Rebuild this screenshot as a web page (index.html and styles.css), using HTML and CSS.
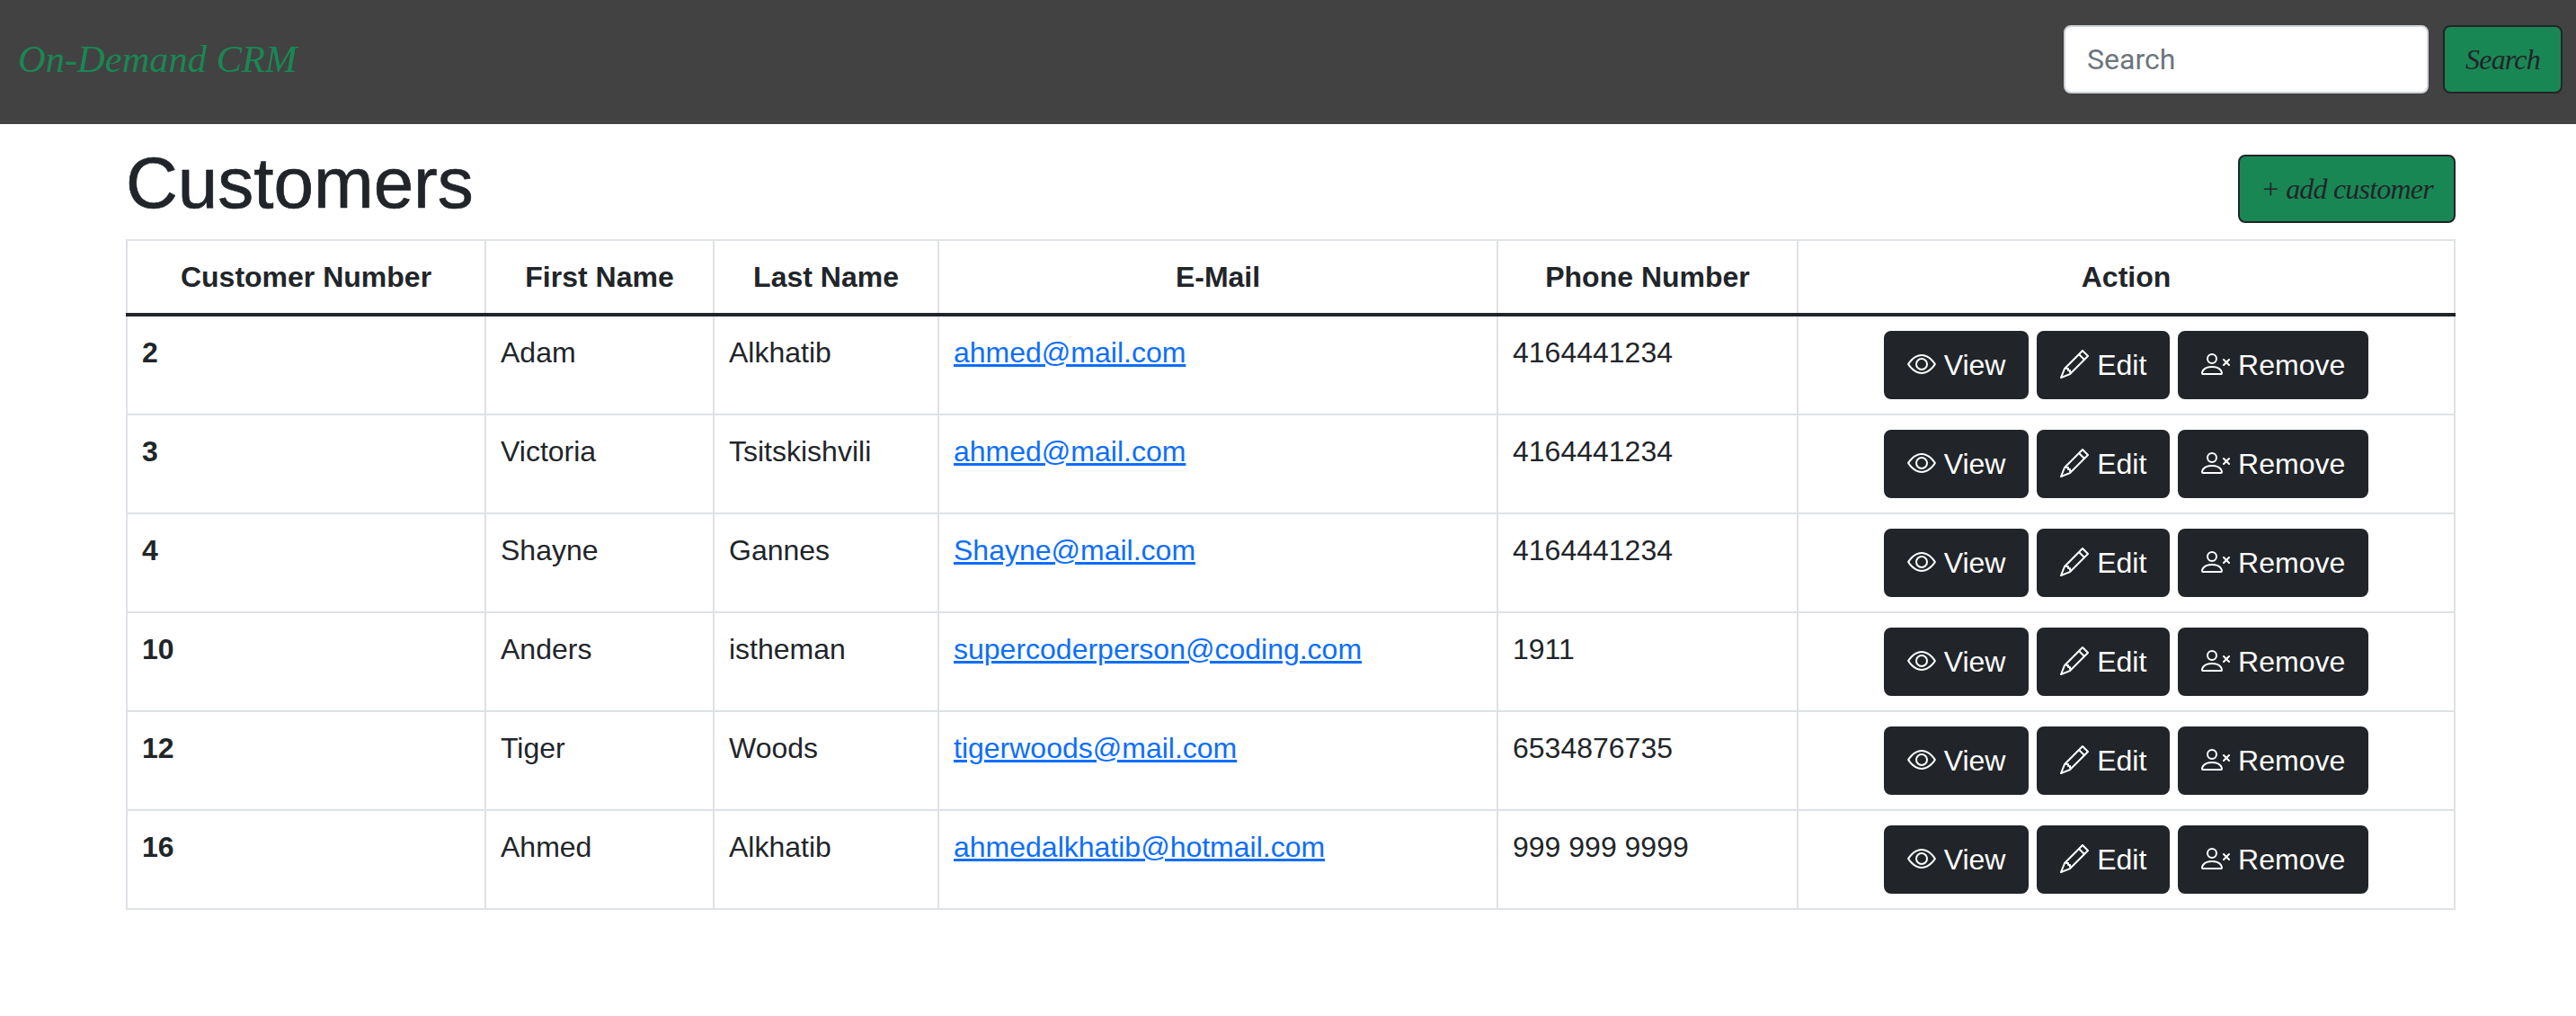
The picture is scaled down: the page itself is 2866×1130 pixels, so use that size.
FILE: index.html
```html
<!DOCTYPE html>
<html lang="en">
<head>
    <meta charset="UTF-8">
    <meta name="viewport" content="width=device-width, initial-scale=1.0">
    <title>On-Demand CRM</title>
    <link rel="stylesheet" href="styles.css">
</head>
<body>
    <svg class="icon-defs" xmlns="http://www.w3.org/2000/svg">
        <symbol id="icon-eye" viewBox="0 0 16 16">
            <path d="M16 8s-3-5.5-8-5.5S0 8 0 8s3 5.5 8 5.5S16 8 16 8zM1.173 8a13.133 13.133 0 0 1 1.66-2.043C4.12 4.668 5.88 3.5 8 3.5c2.12 0 3.879 1.168 5.168 2.457A13.133 13.133 0 0 1 14.828 8c-.058.087-.122.183-.195.288-.335.48-.83 1.12-1.465 1.755C11.879 11.332 10.119 12.5 8 12.5c-2.12 0-3.879-1.168-5.168-2.457A13.134 13.134 0 0 1 1.172 8z"/>
            <path d="M8 5.5a2.5 2.5 0 1 0 0 5 2.5 2.5 0 0 0 0-5zM4.5 8a3.5 3.5 0 1 1 7 0 3.5 3.5 0 0 1-7 0z"/>
        </symbol>
        <symbol id="icon-pencil" viewBox="0 0 16 16">
            <path d="M12.146.146a.5.5 0 0 1 .708 0l3 3a.5.5 0 0 1 0 .708l-10 10a.5.5 0 0 1-.168.11l-5 2a.5.5 0 0 1-.65-.65l2-5a.5.5 0 0 1 .11-.168l10-10zM11.207 2.5 13.5 4.793 14.793 3.5 12.5 1.207 11.207 2.5zm1.586 3L10.5 3.207 4 9.707V10h.5a.5.5 0 0 1 .5.5v.5h.5a.5.5 0 0 1 .5.5v.5h.293l6.5-6.5zm-9.761 5.175-.106.106-1.528 3.821 3.821-1.528.106-.106A.5.5 0 0 1 5 12.5V12h-.5a.5.5 0 0 1-.5-.5V11h-.5a.5.5 0 0 1-.468-.325z"/>
        </symbol>
        <symbol id="icon-person-x" viewBox="0 0 16 16">
            <path d="M6 8a3 3 0 1 0 0-6 3 3 0 0 0 0 6zm2-3a2 2 0 1 1-4 0 2 2 0 0 1 4 0zm4 8c0 1-1 1-1 1H1s-1 0-1-1 1-4 6-4 6 3 6 4zm-1-.004c-.001-.246-.154-.986-.832-1.664C9.516 10.68 8.289 10 6 10c-2.29 0-3.516.68-4.168 1.332-.678.678-.83 1.418-.832 1.664h10z"/>
            <path fill-rule="evenodd" d="M12.146 5.146a.5.5 0 0 1 .708 0L14 6.293l1.146-1.147a.5.5 0 0 1 .708.708L14.707 7l1.147 1.146a.5.5 0 0 1-.708.708L14 7.707l-1.146 1.147a.5.5 0 0 1-.708-.708L13.293 7l-1.147-1.146a.5.5 0 0 1 0-.708z"/>
        </symbol>
    </svg>

    <nav class="navbar">
        <a class="brand" href="#">On-Demand CRM</a>
        <form class="search-form">
            <input class="search-input" type="text" placeholder="Search">
            <button class="btn-green btn-search" type="button">Search</button>
        </form>
    </nav>

    <main class="content">
        <div class="title-row">
            <h1 class="page-title">Customers</h1>
            <button class="btn-green btn-add" type="button">+ add customer</button>
        </div>
        <table class="customers">
            <colgroup>
                <col class="col-number">
                <col class="col-first">
                <col class="col-last">
                <col class="col-email">
                <col class="col-phone">
                <col class="col-action">
            </colgroup>
            <thead>
                <tr>
                    <th>Customer Number</th>
                    <th>First Name</th>
                    <th>Last Name</th>
                    <th>E-Mail</th>
                    <th>Phone Number</th>
                    <th>Action</th>
                </tr>
            </thead>
            <tbody id="customerRows"></tbody>
        </table>
    </main>

    <script>
        const customers = [
            [2, 'Adam', 'Alkhatib', 'ahmed@mail.com', '4164441234'],
            [3, 'Victoria', 'Tsitskishvili', 'ahmed@mail.com', '4164441234'],
            [4, 'Shayne', 'Gannes', 'Shayne@mail.com', '4164441234'],
            [10, 'Anders', 'istheman', 'supercoderperson@coding.com', '1911'],
            [12, 'Tiger', 'Woods', 'tigerwoods@mail.com', '6534876735'],
            [16, 'Ahmed', 'Alkhatib', 'ahmedalkhatib@hotmail.com', '999 999 9999'],
        ];

        function actionButton(icon, label) {
            return `<button class="btn-dark" type="button"><svg class="icon"><use href="#icon-${icon}"></use></svg> ${label}</button>`;
        }

        const rows = customers.map(([id, first, last, email, phone]) => `
            <tr>
                <th class="row-id">${id}</th>
                <td>${first}</td>
                <td>${last}</td>
                <td><a href="#">${email}</a></td>
                <td>${phone}</td>
                <td class="actions">
                    ${actionButton('eye', 'View')}
                    ${actionButton('pencil', 'Edit')}
                    ${actionButton('person-x', 'Remove')}
                </td>
            </tr>`);
        document.getElementById('customerRows').innerHTML = rows.join('');
    </script>
</body>
</html>
```

FILE: styles.css
```css
* {
    box-sizing: border-box;
}
body {
    margin: 0;
    font-family: "Liberation Sans", Arial, sans-serif;
    font-size: 32px;
    line-height: 48px;
    color: #212529;
    background-color: #fff;
}
.icon-defs {
    display: none;
}
.navbar {
    display: flex;
    justify-content: space-between;
    align-items: flex-start;
    height: 138px;
    padding: 28px 15px 0 20px;
    background-color: #424242;
}
.brand {
    margin-top: 14px;
    font-family: "Liberation Serif", serif;
    font-style: italic;
    font-size: 42.5px;
    color: #198754;
    text-decoration: none;
}
.search-form {
    display: flex;
    gap: 16px;
}
.search-input {
    width: 406px;
    height: 76px;
    padding: 12px 24px;
    font-family: Roboto, sans-serif;
    font-size: 32px;
    color: #212529;
    border: 2px solid #ced4da;
    border-radius: 8px;
}
.search-input::placeholder {
    color: #6c757d;
}
.btn-green {
    height: 76px;
    padding: 12px 24px;
    font-family: "Liberation Serif", serif;
    font-style: italic;
    font-size: 32px;
    letter-spacing: -0.8px;
    color: #212529;
    background-color: #198754;
    border: 2px solid #212529;
    border-radius: 8px;
}
.btn-search {
    width: 133px;
    padding: 12px 0;
    text-align: center;
}
.btn-add {
    width: 242px;
    margin-top: 16px;
    padding: 12px 0;
    text-align: center;
}
.content {
    padding: 18px 134px 0 140px;
}
.title-row {
    display: flex;
    justify-content: space-between;
    align-items: flex-start;
    margin-bottom: 14px;
}
.page-title {
    margin: 0;
    font-size: 80px;
    font-weight: 500;
    line-height: 96px;
    -webkit-text-stroke: 0.7px #212529;
}
.customers {
    width: 100%;
    table-layout: fixed;
    border-collapse: collapse;
}
.col-number { width: 399px; }
.col-first { width: 254px; }
.col-last { width: 250px; }
.col-email { width: 622px; }
.col-phone { width: 334px; }
.customers th,
.customers td {
    padding: 16px;
    border: 2px solid #dee2e6;
    vertical-align: top;
    text-align: left;
    color: #212529;
}
.customers thead th {
    text-align: center;
    border-bottom: 4px solid #212529;
}
.customers a {
    color: #0d6efd;
}
.customers .actions {
    text-align: center;
}
.btn-dark {
    height: 76px;
    padding: 12px 24px;
    font-family: inherit;
    font-size: 32px;
    color: #fff;
    background-color: #212529;
    border: 2px solid #212529;
    border-radius: 8px;
}
.icon {
    width: 32px;
    height: 32px;
    fill: currentColor;
    vertical-align: -4px;
}
```
